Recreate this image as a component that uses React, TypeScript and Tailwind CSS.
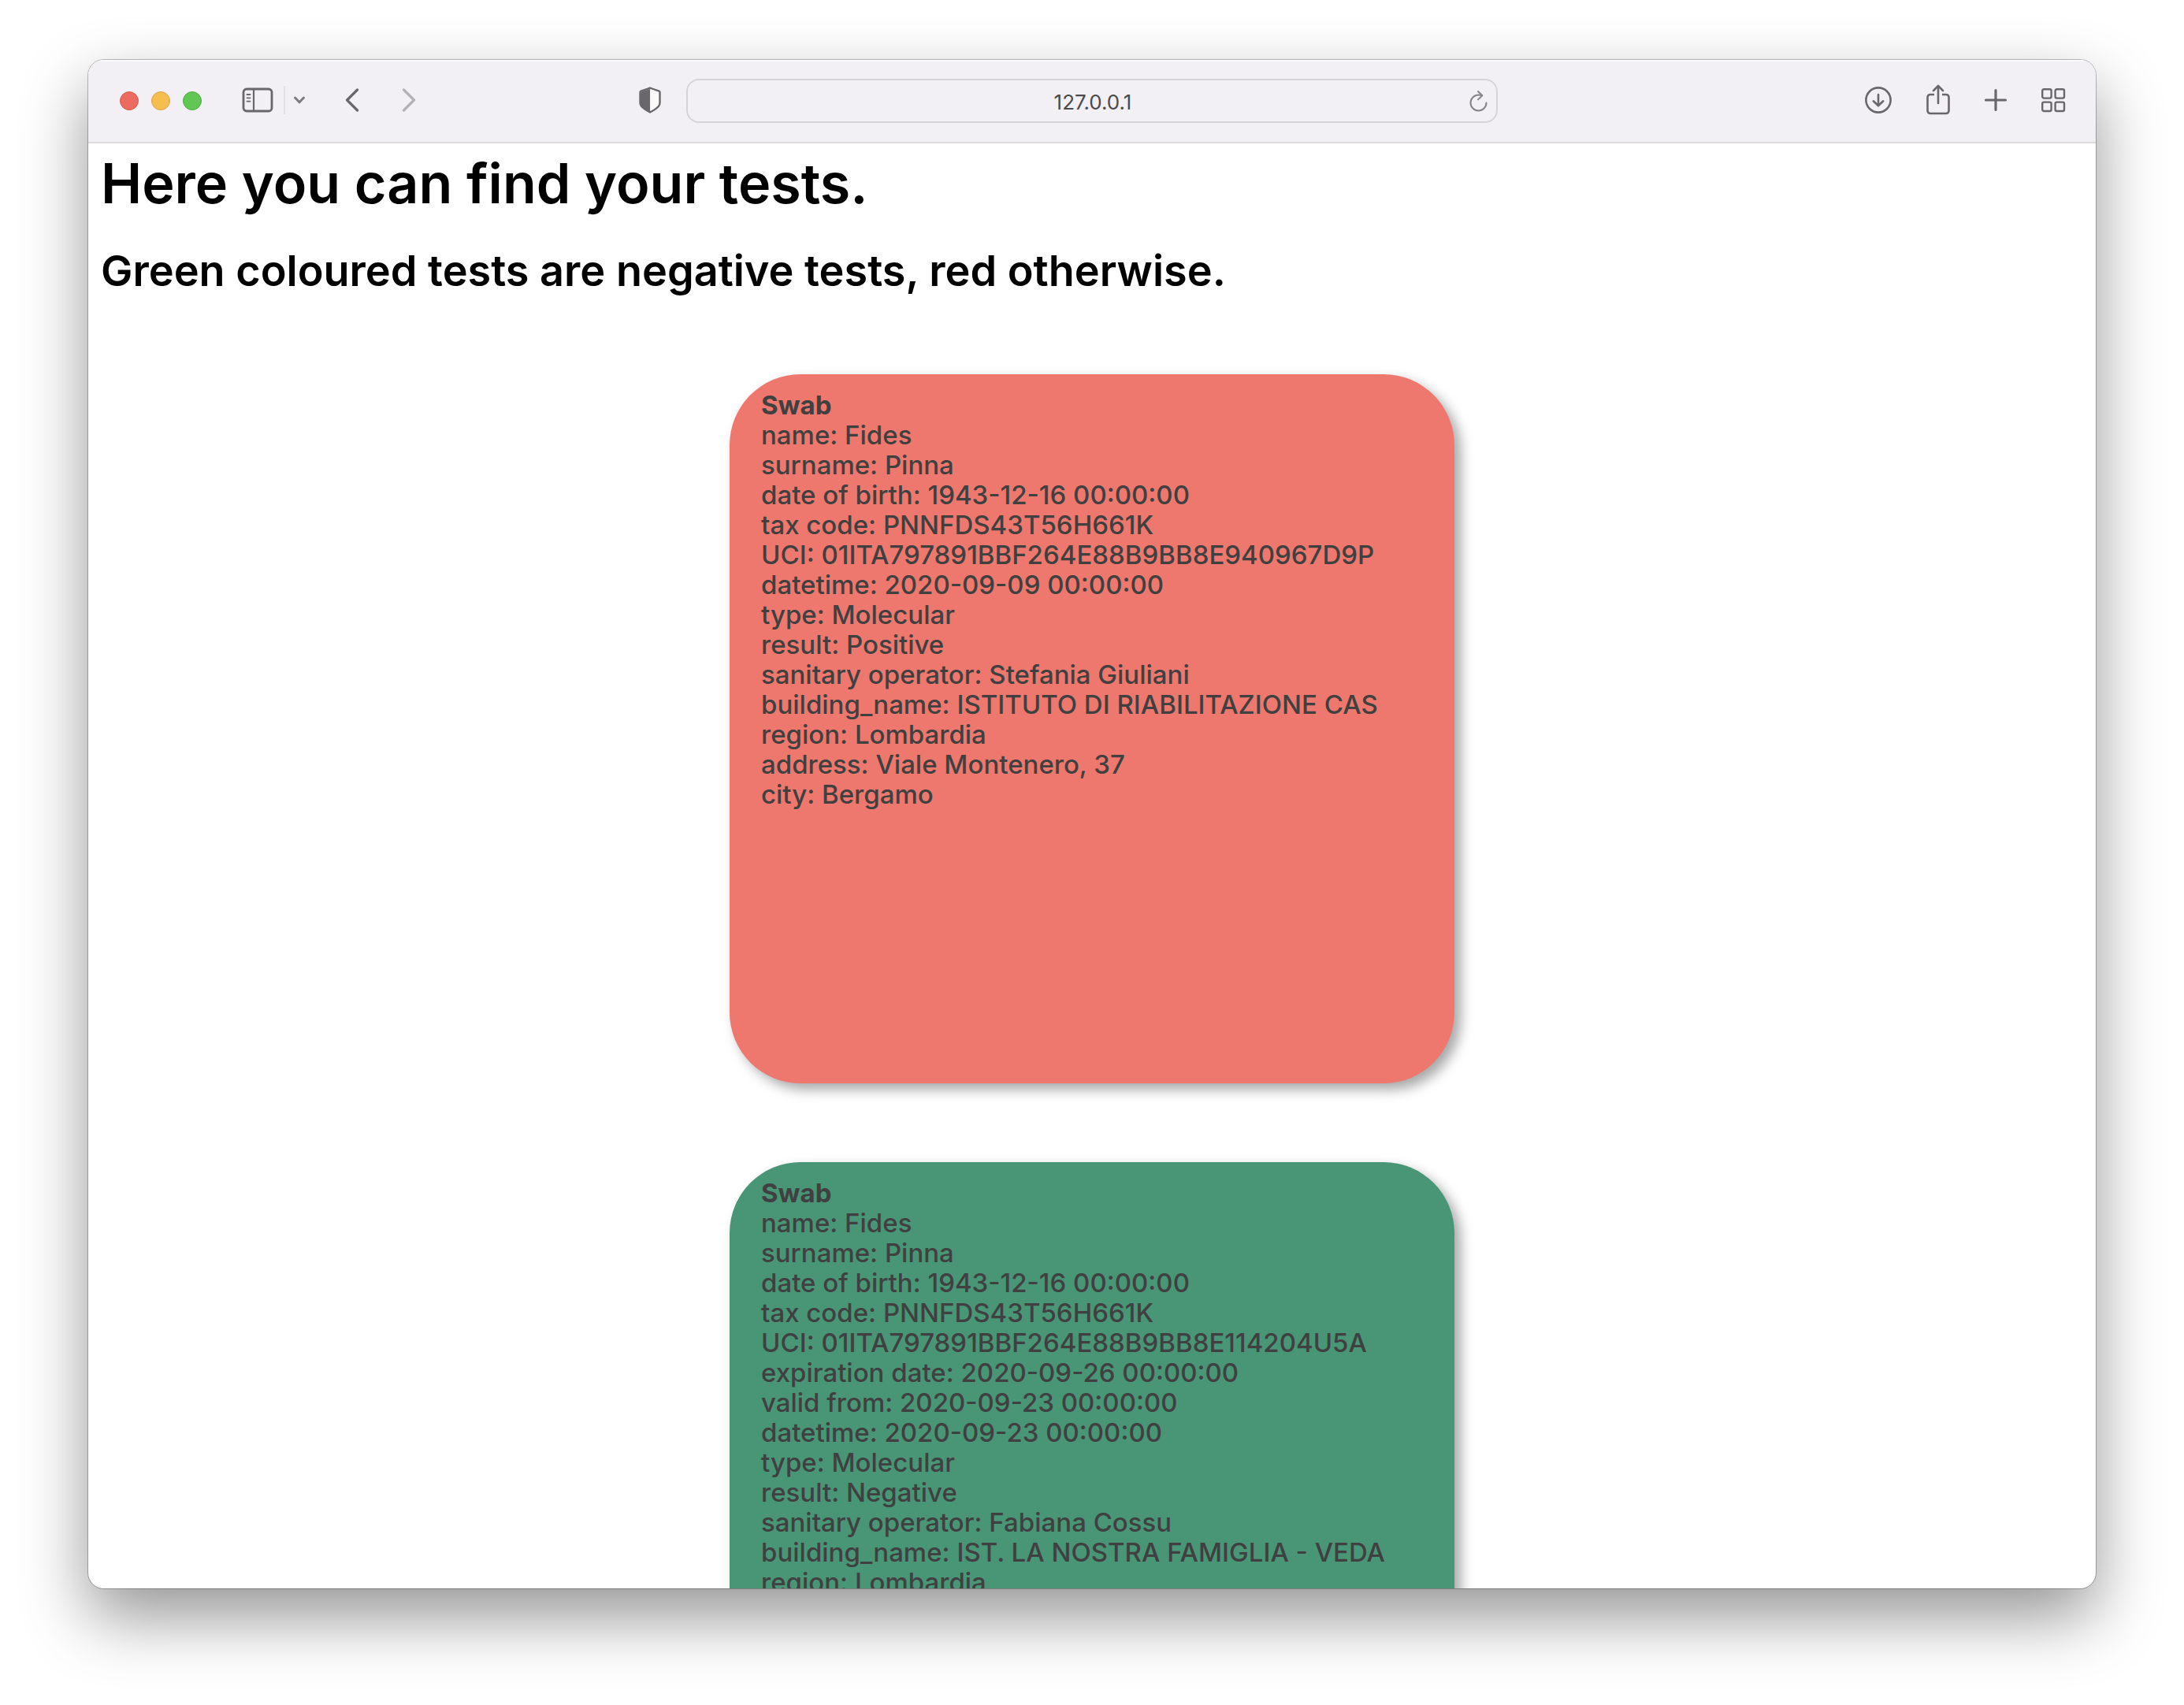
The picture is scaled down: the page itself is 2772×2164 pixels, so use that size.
import React from "react";

type Test = { tone: "positive" | "negative"; lines: [string, string][] };

const tests: Test[] = [
  {
    tone: "positive",
    lines: [
      ["name", "Fides"],
      ["surname", "Pinna"],
      ["date of birth", "1943-12-16 00:00:00"],
      ["tax code", "PNNFDS43T56H661K"],
      ["UCI", "01ITA797891BBF264E88B9BB8E940967D9P"],
      ["datetime", "2020-09-09 00:00:00"],
      ["type", "Molecular"],
      ["result", "Positive"],
      ["sanitary operator", "Stefania Giuliani"],
      ["building_name", "ISTITUTO DI RIABILITAZIONE CAS"],
      ["region", "Lombardia"],
      ["address", "Viale Montenero, 37"],
      ["city", "Bergamo"],
    ],
  },
  {
    tone: "negative",
    lines: [
      ["name", "Fides"],
      ["surname", "Pinna"],
      ["date of birth", "1943-12-16 00:00:00"],
      ["tax code", "PNNFDS43T56H661K"],
      ["UCI", "01ITA797891BBF264E88B9BB8E114204U5A"],
      ["expiration date", "2020-09-26 00:00:00"],
      ["valid from", "2020-09-23 00:00:00"],
      ["datetime", "2020-09-23 00:00:00"],
      ["type", "Molecular"],
      ["result", "Negative"],
      ["sanitary operator", "Fabiana Cossu"],
      ["building_name", "IST. LA NOSTRA FAMIGLIA - VEDA"],
      ["region", "Lombardia"],
    ],
  },
];

function TestCard({ test }: { test: Test }) {
  return (
    <article
      className={`min-h-[900px] w-full max-w-[920px] rounded-[90px] px-10 py-5 text-[33px] leading-[38px] font-medium text-[#404040] shadow-[8px_8px_16px_rgba(0,0,0,0.35)] ${
        test.tone === "positive" ? "bg-[#ee786e]" : "bg-[#489676]"
      }`}
    >
      <h3 className="font-bold">Swab</h3>
      {test.lines.map(([label, value]) => (
        <p key={label} className="whitespace-nowrap">
          {label}: {value}
        </p>
      ))}
    </article>
  );
}

function Toolbar() {
  return (
    <header className="grid h-[106px] shrink-0 grid-cols-[1fr_minmax(0,1030px)_1fr] items-center gap-8 border-b-2 border-[#dcdadd] bg-[#f2f0f5] px-10 text-[#69666c] shadow-[inset_0_2px_0_#faf9fb]">
      <div className="flex items-center">
        <div className="flex gap-4">
          <button aria-label="Close" className="size-6 rounded-full border border-[#d6584f] bg-[#ed6a5f]" />
          <button aria-label="Minimize" className="size-6 rounded-full border border-[#d8a243] bg-[#f5bf50]" />
          <button aria-label="Zoom" className="size-6 rounded-full border border-[#50a93f] bg-[#62c655]" />
        </div>
        <div className="ml-[51px] flex flex-1 items-center pb-0.5">
          <button aria-label="Show sidebar">
            <svg width="40" height="32" viewBox="0 0 40 32" fill="none" stroke="currentColor" strokeLinecap="round">
              <rect x="2" y="2" width="36" height="28" rx="4" strokeWidth="2.8" />
              <path d="M15 2v28" strokeWidth="2.2" />
              <path d="M6.5 9h4M6.5 13.3h4M6.5 17.6h4" strokeWidth="1.8" />
            </svg>
          </button>
          <span className="ml-[13px] h-9 w-0.5 bg-[#e2e0e5]" />
          <button aria-label="Tab groups" className="ml-[10px] text-[#7d7a82]">
            <svg width="16" height="12" viewBox="0 0 16 12" fill="none" stroke="currentColor" strokeWidth="3" strokeLinecap="round" strokeLinejoin="round">
              <path d="M2.5 3l5.5 5.8L13.5 3" />
            </svg>
          </button>
          <button aria-label="Back" className="ml-[50px]">
            <svg width="18" height="30" viewBox="0 0 18 30" fill="none" stroke="currentColor" strokeWidth="3.2" strokeLinecap="round" strokeLinejoin="round">
              <path d="M15.5 2L2.5 15l13 13" />
            </svg>
          </button>
          <button aria-label="Forward" className="ml-[54px] text-[#b3b0b7]">
            <svg width="18" height="30" viewBox="0 0 18 30" fill="none" stroke="currentColor" strokeWidth="3.2" strokeLinecap="round" strokeLinejoin="round">
              <path d="M2.5 2l13 13-13 13" />
            </svg>
          </button>
          <button aria-label="Privacy report" className="ml-auto">
            <svg width="28" height="34" viewBox="0 0 28 34" fill="none">
              <path
                d="M14 1.5c3 1.3 7.500 2.700 11.600 4.100.6.200.9.700.9 1.300v13.600c0 1.600-.4 2.900-1.500 4.200-2.500 3-7 5.600-11 7.800-4-2.200-8.500-4.800-11-7.800-1.100-1.300-1.500-2.600-1.500-4.200V6.900c0-.6.3-1.100.9-1.300C6.500 4.200 11 2.800 14 1.500z"
                stroke="currentColor"
                strokeWidth="2.4"
                strokeLinejoin="round"
              />
              <path d="M14.2 2.5L3 6.5 2 8v14l2 4 10.200 6z" fill="currentColor" />
              <path d="M14.2 4L24.8 7.500v13.500c0 1-.3 2-1 2.900-2.200 2.500-6 4.700-9.600 6.700z" fill="#fafafb" />
            </svg>
          </button>
        </div>
      </div>

      <div className="relative">
        <input
          aria-label="Address"
          defaultValue="127.0.0.1"
          className="block h-14 w-full rounded-2xl border-2 border-[#d5d3d9] bg-transparent pt-0.5 pl-0.5 text-center text-[26px] text-[#4b4a4d]"
        />
        <button aria-label="Reload" className="absolute top-[14px] right-3 text-[#858389]">
          <svg width="24" height="28" viewBox="0 0 24 28" fill="none" stroke="currentColor" strokeWidth="2" strokeLinecap="round" strokeLinejoin="round">
            <path d="M21.500 16.500A10 10 0 1 1 11.500 6.500c1.800 0 3.400.1 4.500.6" />
            <path d="M11 2l5.300 5.200-5.300 5.200" />
          </svg>
        </button>
      </div>

      <div className="-mr-0.5 flex items-center justify-end gap-[42px] pb-0.5">
        <button aria-label="Downloads">
          <svg width="36" height="36" viewBox="0 0 36 36" fill="none" stroke="currentColor" strokeWidth="2.6" strokeLinecap="round" strokeLinejoin="round">
            <circle cx="18" cy="18" r="15.6" />
            <path d="M18 11v14M11.800 19.300L18 25.200l6.200-5.900" />
          </svg>
        </button>
        <button aria-label="Share">
          <svg width="32" height="40" viewBox="0 0 32 40" fill="none" stroke="currentColor" strokeWidth="2.6" strokeLinecap="round" strokeLinejoin="round">
            <path d="M11 13H6a3.500 3.500 0 0 0-3.500 3.500v17A3.500 3.500 0 0 0 6 37h20a3.500 3.500 0 0 0 3.500-3.500v-17A3.500 3.500 0 0 0 26 13h-5" strokeLinecap="butt" />
            <path d="M16 24V2M10 8l6-6.200L22 8" />
          </svg>
        </button>
        <button aria-label="New tab">
          <svg width="30" height="30" viewBox="0 0 30 30" fill="none" stroke="currentColor" strokeWidth="3.2" strokeLinecap="round">
            <path d="M15 2.500v25M2.500 15h25" />
          </svg>
        </button>
        <button aria-label="Tab overview">
          <svg width="32" height="32" viewBox="0 0 32 32" fill="none" stroke="currentColor" strokeWidth="2.4">
            <rect x="2.2" y="2.2" width="11.4" height="11.4" rx="2" />
            <rect x="18.6" y="2.2" width="11.4" height="11.4" rx="2" />
            <rect x="2.2" y="18.6" width="11.4" height="11.4" rx="2" />
            <rect x="18.6" y="18.6" width="11.4" height="11.4" rx="2" />
          </svg>
        </button>
      </div>
    </header>
  );
}

export default function App() {
  return (
    <div className="flex h-screen flex-col overflow-hidden bg-white px-28 pt-[76px] pb-[148px] font-['Inter',sans-serif]">
      <div className="flex min-h-0 flex-1 flex-col overflow-hidden rounded-[20px] bg-white shadow-[0_0_0_1px_rgba(0,0,0,0.25),0_36px_84px_rgba(0,0,0,0.42)]">
        <Toolbar />
        <main className="min-h-0 flex-1 overflow-hidden px-4 text-black">
          <h1 className="pt-3 text-[70px] leading-[78px] font-semibold">Here you can find your tests.</h1>
          <h2 className="mt-[42px] text-[54px] leading-[60px] font-semibold">Green coloured tests are negative tests, red otherwise.</h2>
          <section className="mt-[101px] flex flex-col items-center gap-[100px]">
            {tests.map((test) => (
              <TestCard key={test.tone} test={test} />
            ))}
          </section>
        </main>
      </div>
    </div>
  );
}
